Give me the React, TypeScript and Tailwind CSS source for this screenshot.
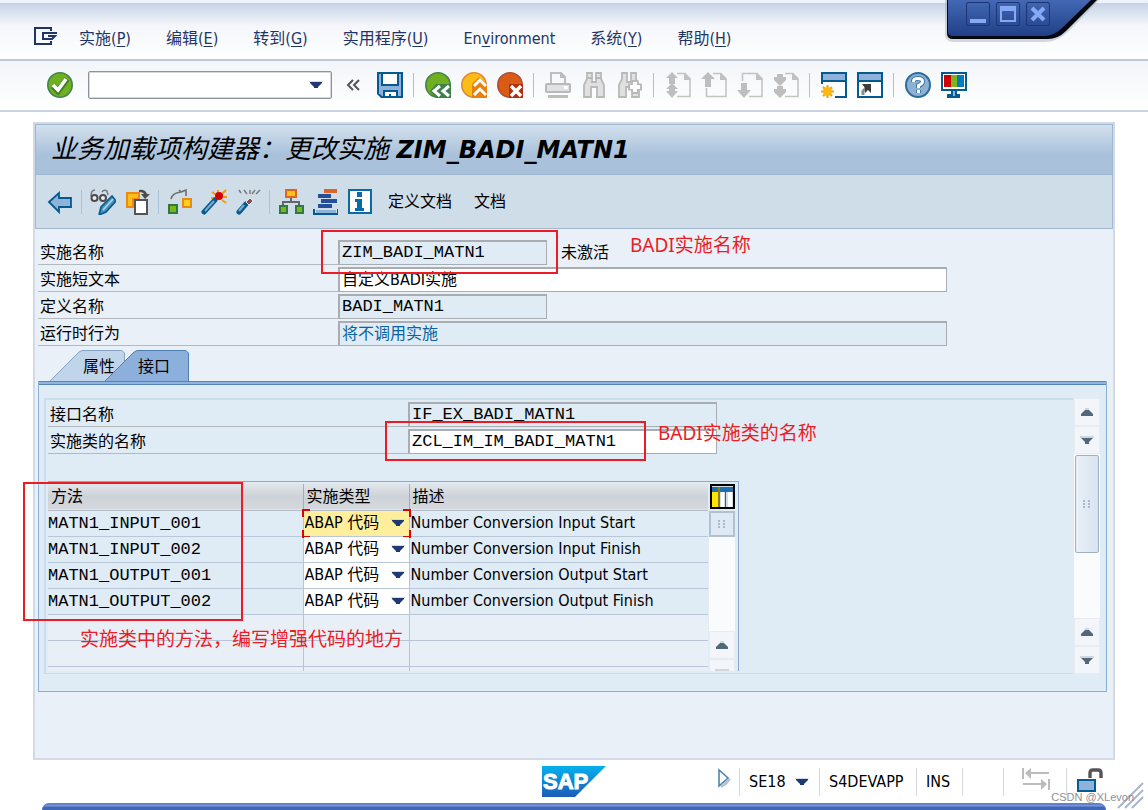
import type { ReactNode } from "react";

const MENUS = [
  { before: "实施(", key: "P", after: ")" },
  { before: "编辑(", key: "E", after: ")" },
  { before: "转到(", key: "G", after: ")" },
  { before: "实用程序(", key: "U", after: ")" },
  { before: "En", key: "v", after: "ironment" },
  { before: "系统(", key: "Y", after: ")" },
  { before: "帮助(", key: "H", after: ")" },
];

const METHODS = [
  { name: "MATN1_INPUT_001", description: "Number Conversion Input Start" },
  { name: "MATN1_INPUT_002", description: "Number Conversion Input Finish" },
  { name: "MATN1_OUTPUT_001", description: "Number Conversion Output Start" },
  { name: "MATN1_OUTPUT_002", description: "Number Conversion Output Finish" },
];

function Icon({ children }: { children: ReactNode }) {
  return (
    <svg viewBox="0 0 26 26" className="block size-[26px]" fill="none" aria-hidden="true">
      {children}
    </svg>
  );
}

function IconButton({ label, disabled, children }: { label: string; disabled?: boolean; children: ReactNode }) {
  return (
    <button type="button" aria-label={label} disabled={disabled} className="shrink-0">
      <Icon>{children}</Icon>
    </button>
  );
}

function Separator() {
  return <span className="h-6 w-px shrink-0 bg-[#a9c3de]" />;
}

function Caret() {
  return (
    <svg viewBox="0 0 14 8" className="block h-2 w-3.5 shrink-0" aria-hidden="true">
      <path d="M0 0H14V1H0Z" fill="#d5dae2" />
      <path d="M1 1H13V2L9 6V7H5V6L1 2Z" fill="#1f3a73" />
    </svg>
  );
}

// Grey page with a folded corner, shared by the four paging buttons
function PageOutline() {
  return (
    <>
      <path d="M12 1.5H20L25 6.5V24.5H12" stroke="#c4c4c4" strokeWidth="1.6" />
      <path d="M19 1L26 8H19Z" fill="#c0c0c0" />
    </>
  );
}

function MainToolbar() {
  return (
    <div className="flex h-[51px] items-center gap-2.5 border-b-2 border-[#cbd2df] bg-linear-to-b from-[#f2f5f9] to-white pb-0.5 pl-[47px]">
      <IconButton label="Enter">
        <circle cx="13" cy="13" r="12.2" fill="#6fb01e" stroke="#458452" strokeWidth="1.6" />
        <path d="M6 14L11 19L20 7" stroke="#3e7a2c" strokeWidth="6" />
        <path d="M6 13L11 18L19 7" stroke="#fff" strokeWidth="3.6" />
      </IconButton>
      <div className="ml-[5px] flex h-7 w-[244px] items-center rounded-xs border border-[#8f9397] bg-white pr-2 ring-1 ring-[#d5d8dc] ring-inset">
        <input aria-label="Command" className="min-w-0 flex-1 px-1 outline-none" />
        <button type="button" aria-label="History">
          <Caret />
        </button>
      </div>
      <button type="button" aria-label="Collapse" className="w-[25px] pl-1">
        <svg viewBox="0 0 14 12" className="h-3 w-3.5" fill="none" aria-hidden="true">
          <path d="M7 1L2 6L7 11M13 1L8 6L13 11" stroke="#555" strokeWidth="2" />
        </svg>
      </button>
      <IconButton label="Save">
        <path d="M0 0H26V26H4L0 22Z" fill="#055a8f" />
        <path d="M2 2H4V22H2ZM22 2H24V24H22Z" fill="#8fb2da" />
        <path d="M6 2H20V12H6Z" fill="#fff" />
        <path d="M2 14H24V24H5L2 21Z" fill="#8fb2da" />
        <path d="M6 18H21V26H6Z" fill="#055a8f" />
        <path d="M8 20H19V24H14V22H12V24H8Z" fill="#fff" />
      </IconButton>
      <span className="mr-px h-6 w-px shrink-0 bg-[#a9c3de]" />
      <IconButton label="Back">
        <circle cx="13" cy="13" r="12.2" fill="#6fb01e" stroke="#458452" strokeWidth="1.6" />
        <path d="M11 12H26V26H11L5 19Z" fill="#3e7f4a" />
        <path d="M15 14L9 19L15 24M24 14L18 19L24 24" stroke="#fff" strokeWidth="3" />
      </IconButton>
      <IconButton label="Exit">
        <circle cx="13" cy="13" r="12.2" fill="#fdbd14" stroke="#dd8a3c" strokeWidth="1.6" />
        <path d="M11 12L18 5L26 12V26H11Z" fill="#e5820f" />
        <path d="M13 14L19 8L25 14M13 23L19 17L25 23" stroke="#fff" strokeWidth="3" />
      </IconButton>
      <IconButton label="Cancel">
        <circle cx="13" cy="13" r="12.2" fill="#d95b16" stroke="#b14f35" strokeWidth="1.6" />
        <path d="M12 12H26V26H12Z" fill="#b03010" />
        <path d="M14 14L24 24M24 14L14 24" stroke="#fff" strokeWidth="3.4" />
      </IconButton>
      <span className="mr-px h-6 w-px shrink-0 bg-[#a9c3de]" />
      <IconButton label="Print" disabled>
        <path d="M6 11V1H16L20 5V11" stroke="#bdbdbd" strokeWidth="2" />
        <path d="M15 0L21 6H15Z" fill="#bdbdbd" />
        <rect x="1" y="12" width="24" height="8" rx="1" fill="#e2e2e2" stroke="#b9b9b9" strokeWidth="2" />
        <path d="M19 14H23V17H19Z" fill="#fff" />
        <path d="M3 23H23V26H3Z" fill="#bdbdbd" />
      </IconButton>
      <IconButton label="Find" disabled>
        <path d="M3 25V13L6 7V1H11V10H15V1H20V7L23 13V25H16V15H10V25Z" fill="#e0e0e0" stroke="#b9b9b9" strokeWidth="1.8" />
        <path d="M5 6H12M14 6H21" stroke="#b9b9b9" strokeWidth="2" />
      </IconButton>
      <IconButton label="Find next" disabled>
        <path d="M2 25V13L5 7V1H10V10H14V1H19V7L22 13V25H15V15H9V25Z" fill="#e0e0e0" stroke="#b9b9b9" strokeWidth="1.8" />
        <path d="M18 8V22M11 15H25" stroke="#b9b9b9" strokeWidth="7" />
        <path d="M18 10V20M13 15H23" stroke="#fff" strokeWidth="4" />
      </IconButton>
      <span className="mr-px h-6 w-px shrink-0 bg-[#a9c3de]" />
      <IconButton label="First page" disabled>
        <PageOutline />
        <path d="M7 0L13 6H10V9H4V6H1ZM4 9H10V12H4ZM7 11L13 17H10V19H13L7 26L1 19H4V17H1Z" fill="#bebebe" />
      </IconButton>
      <IconButton label="Previous page" disabled>
        <PageOutline />
        <path d="M5.500 16V24.500H13" stroke="#c4c4c4" strokeWidth="1.6" />
        <path d="M7 0L14 7H10V15H4V7H0Z" fill="#bebebe" />
      </IconButton>
      <IconButton label="Next page" disabled>
        <PageOutline />
        <path d="M5.500 9V1.500H13" stroke="#c4c4c4" strokeWidth="1.6" />
        <path d="M4 11H10V18H14L7 26L0 18H4Z" fill="#bebebe" />
      </IconButton>
      <IconButton label="Last page" disabled>
        <PageOutline />
        <path d="M4 2H10V5H13V8L7 14L1 8V5H4ZM4 14H10V17H13V20L7 26L1 20V17H4Z" fill="#bebebe" />
      </IconButton>
      <span className="mr-px h-6 w-px shrink-0 bg-[#a9c3de]" />
      <IconButton label="New session">
        <path d="M1 12V1H25V25H14" fill="#fff" stroke="#055a8f" strokeWidth="2" />
        <path d="M2 2H24V8H2Z" fill="#8fb2da" />
        <path d="M1 9H25" stroke="#055a8f" strokeWidth="2" />
        <circle cx="6.500" cy="19.500" r="6" fill="#fdf3d0" />
        <path d="M6.500 13V26M0 19.500H13M2 15L11 24M11 15L2 24" stroke="#f5a11a" strokeWidth="2" />
        <circle cx="6.500" cy="19.500" r="4.500" fill="#fdb913" />
      </IconButton>
      <IconButton label="Create shortcut">
        <path d="M1 1H25V25H1Z" fill="#fff" stroke="#055a8f" strokeWidth="2" />
        <path d="M2 2H24V8H2Z" fill="#8fb2da" />
        <path d="M1 9H25" stroke="#055a8f" strokeWidth="2" />
        <path d="M6 23V19L11 14" stroke="#8c8c8c" strokeWidth="3" />
        <path d="M5 12H14V21L11 18L8 21V16Z" fill="#3d3d3d" />
      </IconButton>
      <span className="mr-px h-6 w-px shrink-0 bg-[#a9c3de]" />
      <IconButton label="Help">
        <circle cx="13" cy="13" r="12" fill="#8db0d5" stroke="#2a6c9c" strokeWidth="2" />
        <path d="M8.500 10V9Q8.500 6.500 13 6.500Q17.500 6.500 17.500 9.500Q17.500 12 13.500 13.500V16M13.500 18V21" stroke="#3f78a8" strokeWidth="5" />
        <path d="M8.500 10V9Q8.500 6.500 13 6.500Q17.500 6.500 17.500 9.500Q17.500 12 13.500 13.500V16M13.500 18V21" stroke="#fff" strokeWidth="3" />
      </IconButton>
      <IconButton label="Customize layout">
        <path d="M1 1H25V18H1Z" fill="#fff" stroke="#055a8f" strokeWidth="2" />
        <path d="M3 3H10V15H3Z" fill="#cc0000" />
        <path d="M10 3H16V15H10Z" fill="#7cb51c" />
        <path d="M16 3H23V15H16Z" fill="#007cc2" />
        <path d="M10 19H16V22H19V26H6V22H10Z" fill="#055a8f" />
        <path d="M12 19H14V24H12Z" fill="#8fb2da" />
      </IconButton>
    </div>
  );
}

function AppToolbar() {
  return (
    <div className="flex h-[54px] items-center gap-2 border border-t-0 border-[#a5b9cd] border-t-[#e6eff7] bg-[#cfdde8] pl-[11px]">
      <IconButton label="返回">
        <path d="M2 13L12 4V9H24V18H12V23Z" fill="#8fb2da" stroke="#055a8f" strokeWidth="1.8" />
      </IconButton>
      <Separator />
      <IconButton label="显示 / 更改">
        <path d="M1 7Q1 1 5 1M12 3Q14 0 17 2L18 6" stroke="#777" strokeWidth="1.4" />
        <circle cx="4.500" cy="9" r="3" fill="#e9eff4" stroke="#4b4b4b" strokeWidth="2" />
        <circle cx="13" cy="9" r="3" fill="#e9eff4" stroke="#4b4b4b" strokeWidth="2" />
        <path d="M22 7L11 18L9 26L16 23L26 12Z" fill="#4a90bb" stroke="#055a8f" strokeWidth="1.6" />
        <path d="M13 21L23 10" stroke="#b6d3e8" strokeWidth="1.8" />
      </IconButton>
      <IconButton label="其他对象">
        <path d="M3 4H15V10H9V18H3Z" fill="#fdbf1c" stroke="#ee8a12" strokeWidth="2" />
        <path d="M15 1Q21 0 23 5H26L21 10L17 5H20Q19 3 15 3Z" fill="#4b4b4b" />
        <path d="M11 11H23V25H11Z" fill="#fff" stroke="#555" strokeWidth="2" />
      </IconButton>
      <Separator />
      <IconButton label="检查">
        <path d="M4 10Q5 4 14 3L12 1M14 3L19 1V7" stroke="#6d6d6d" strokeWidth="1.6" />
        <path d="M16 10H24V18H16Z" fill="#fdd01c" stroke="#ee8a12" strokeWidth="2" />
        <path d="M2 16H10V24H2Z" fill="#7cb51c" stroke="#2f7a3d" strokeWidth="2" />
      </IconButton>
      <IconButton label="激活">
        <path d="M17 1V5M25 1L21 5M20 8H26M21 11L25 14M11 3L15 6M10 9H14" stroke="#f29a14" strokeWidth="2" />
        <path d="M3 23L14 11" stroke="#055a8f" strokeWidth="5" strokeLinecap="round" />
        <path d="M4 22L13 12" stroke="#79acd0" strokeWidth="2" />
        <circle cx="18" cy="7" r="4" fill="#d40000" />
      </IconButton>
      <IconButton label="取消激活">
        <path d="M4 1L6 4M9 1L12 5M15 1V5M20 1L17 5M25 1L21 5" stroke="#777" strokeWidth="1.4" />
        <path d="M4 23L11 15" stroke="#055a8f" strokeWidth="5" strokeLinecap="round" />
        <path d="M4 22L9 16" stroke="#79acd0" strokeWidth="2" />
        <path d="M11 13L15 9L18 12L14 16Z" fill="#8d4a4a" stroke="#dfe5ea" />
      </IconButton>
      <Separator />
      <IconButton label="层次">
        <path d="M13 9V13M5 17V13H21V17" stroke="#666" strokeWidth="2" />
        <path d="M8 1H18V8H8Z" fill="#fdbf1c" stroke="#e0641a" strokeWidth="2" />
        <path d="M2 17H9V24H2ZM18 17H25V24H18Z" fill="#7cb51c" stroke="#2f7a3d" strokeWidth="2" />
      </IconButton>
      <IconButton label="对齐">
        <path d="M12 0H25V4H12Z" fill="#d9652a" />
        <path d="M6 5H19V9H6ZM9 10H25V14H9ZM6 15H20V19H6Z" fill="#24509a" />
        <path d="M2 20V25H26V20" stroke="#055a8f" strokeWidth="2" />
        <path d="M4 21H24V24H4Z" fill="#8fb2da" />
      </IconButton>
      <IconButton label="信息">
        <path d="M3 1H25V24H3Z" fill="#fff" stroke="#0a6aa6" strokeWidth="2" />
        <path d="M11 3H16V8H11ZM9 10H16V19H18V22H9V19H11V13H9Z" fill="#0a6aa6" />
      </IconButton>
      <button type="button" className="ml-2">定义文档</button>
      <button type="button" className="ml-3.5">文档</button>
    </div>
  );
}

function FieldRow({ id, label, labelClass, children }: { id: string; label: string; labelClass: string; children: ReactNode }) {
  return (
    <div className="flex h-[25px]">
      <label htmlFor={id} className={`shrink-0 border-b border-[#b5b8bc] leading-[26px] ${labelClass}`}>
        {label}
      </label>
      {children}
    </div>
  );
}

const FIELD = "min-w-0 border border-t-2 border-l-2 border-[#a9adb2] pl-0.5 outline-none ";
const MONO = "font-['Liberation_Mono','Noto_Sans_CJK_SC',monospace] text-[17px] ";

function ScrollArrow({ down }: { down?: boolean }) {
  return (
    <button
      type="button"
      aria-label={down ? "向下滚动" : "向上滚动"}
      className="flex h-7 w-full shrink-0 items-center justify-center border border-[#e9ebf0] bg-[#f2f5fa]"
    >
      <svg viewBox="0 0 14 8" className="h-2 w-3.5" aria-hidden="true">
        {down ? (
          <>
            <path d="M0 0H14V2H0Z" fill="#cfd6dc" />
            <path d="M1 2H13L9 6V8H5V6Z" fill="#526878" />
          </>
        ) : (
          <>
            <path d="M5 0H9V2H5Z" fill="#cfd6dc" />
            <path d="M1 8V6L5 2H9L13 6V8Z" fill="#526878" />
          </>
        )}
      </svg>
    </button>
  );
}

function Grip() {
  return (
    <svg viewBox="0 0 8 8" className="size-2" fill="#a9bacb" aria-hidden="true">
      <path d="M0 0H2V2H0ZM5 0H7V2H5ZM0 3H2V5H0ZM5 3H7V5H5ZM0 6H2V8H0ZM5 6H7V8H5Z" />
    </svg>
  );
}

function Tabs() {
  return (
    <div role="tablist" className="mt-1 flex h-[31px] pl-3">
      <button type="button" role="tab" aria-selected="false" className="relative w-[75px] pt-0.5 pl-[33px] text-left">
        <svg viewBox="0 0 75 31" className="absolute inset-0 h-full w-full" aria-hidden="true">
          <path d="M0 31L29 2L32 0.500H72L74.500 3V31" fill="#c0d5e9" stroke="#84a3c6" />
        </svg>
        <span className="relative">属性</span>
      </button>
      <button type="button" role="tab" aria-selected="true" className="relative -ml-5 w-[84px] pt-0.5 pl-[33px] text-left">
        <svg viewBox="0 0 84 31" className="absolute inset-0 h-full w-full" aria-hidden="true">
          <path d="M0 31L29 2L32 0.500H81L83.500 3V31" fill="#8cb0db" stroke="#4f80b4" />
        </svg>
        <span className="relative">接口</span>
      </button>
    </div>
  );
}

function MethodTable() {
  return (
    <div className="mt-[27px] flex h-[190px] w-[691px] overflow-hidden border-t border-r border-[#8aa9cc] pt-0.5">
      <table className="h-fit w-[660px] table-fixed border-collapse">
        <colgroup>
          <col className="w-[255px]" />
          <col className="w-[106px]" />
          <col />
        </colgroup>
        <thead>
          <tr className="h-[26px] border-b border-[#b3bcc7] bg-linear-to-b from-[#e2e6ea] via-[#cdd2d8] to-[#d5d9de] text-left leading-none">
            <th className="p-0 pl-[3px] font-normal">方法</th>
            <th className="border-x border-[#a4acb6] p-0 pl-[3px] font-normal">实施类型</th>
            <th className="p-0 pl-[3px] font-normal">描述</th>
          </tr>
        </thead>
        <tbody>
          {METHODS.map((method, i) => (
            <tr key={method.name} className="h-[26px] border-b border-[#b9c8d8] bg-[#dfebf5]">
              <td className={MONO + "p-0 leading-none"}>{method.name}</td>
              <td className={`relative border-x border-[#b9c4d1] p-0 ${i === 0 ? "bg-[#ffee9b]" : "bg-white"}`}>
                <select
                  aria-label={`实施类型 ${method.name}`}
                  className="block h-[25px] w-full appearance-none bg-transparent pl-px outline-none"
                >
                  <option>ABAP 代码</option>
                </select>
                <span className="pointer-events-none absolute top-2 right-1">
                  <Caret />
                </span>
                {i === 0 && (
                  <span className="pointer-events-none absolute -inset-x-0.5 -top-0.5 -bottom-0.5 flex flex-col justify-between">
                    <span className="flex justify-between">
                      <span className="size-2 border-t-2 border-l-2 border-[#e00000]" />
                      <span className="size-2 border-t-2 border-r-2 border-[#e00000]" />
                    </span>
                    <span className="flex justify-between">
                      <span className="size-2 border-b-2 border-l-2 border-[#e00000]" />
                      <span className="size-2 border-r-2 border-b-2 border-[#e00000]" />
                    </span>
                  </span>
                )}
              </td>
              <td className="p-0 pl-px leading-none whitespace-nowrap">{method.description}</td>
            </tr>
          ))}
          {[0, 1, 2].map((n) => (
            <tr key={n} className="h-[26px] border-b border-[#b9c4d6] bg-[#e8eff7]">
              <td className="p-0" />
              <td className="border-x border-[#b9c4d1] p-0" />
              <td className="p-0" />
            </tr>
          ))}
        </tbody>
      </table>
      <div className="ml-px flex w-[26px] flex-col items-center">
        <button type="button" aria-label="表格设置" className="mb-0.5 shrink-0">
          <svg viewBox="0 0 25 25" className="block size-[25px]" aria-hidden="true">
            <path d="M0 0H25V25H0Z" fill="#000" />
            <path d="M2 2H23V23H2Z" fill="#cfdde8" />
            <path d="M2 3H23V8H2Z" fill="#1f6fb2" />
            <path d="M2 8H8V23H2Z" fill="#ffe600" />
            <path d="M8 3H10V23H8Z" fill="#8f8200" />
            <path d="M11 8H14V23H11ZM18 8H22V23H18Z" fill="#fff" />
            <path d="M15 3H16V23H15Z" fill="#555" />
          </svg>
        </button>
        <div className="flex h-[26px] w-full shrink-0 items-center justify-center border-2 border-[#b3c2d1] bg-[#dfe9f3]">
          <Grip />
        </div>
        <div className="h-[94px] w-full shrink-0 bg-[#fafbfd]" />
        <ScrollArrow />
        <ScrollArrow down />
      </div>
    </div>
  );
}

function InterfaceTab() {
  return (
    <div className="mr-1.5 border border-t-0 border-[#8ab0d4] bg-[#dfebf5]">
      <div className="h-1 border-y border-[#5484b8] bg-[#8fb4dd]" />
      <div className="flex pt-[13px] pr-1.5 pb-[17px] pl-[5px]">
        <div className="min-w-0 flex-1 border-t-2 border-b border-l-2 border-[#ccdcea] py-0.5 pl-0.5">
          <div className="flex flex-col gap-0.5">
            <FieldRow id="interface" label="接口名称" labelClass="w-[360px] pl-0.5">
              <input id="interface" readOnly defaultValue="IF_EX_BADI_MATN1" className={FIELD + MONO + "w-[309px] bg-[#dfebf5]"} />
            </FieldRow>
            <FieldRow id="implClass" label="实施类的名称" labelClass="w-[360px] pl-0.5">
              <input id="implClass" defaultValue="ZCL_IM_IM_BADI_MATN1" className={FIELD + MONO + "w-[309px] bg-white"} />
            </FieldRow>
          </div>
          <MethodTable />
        </div>
        <div className="ml-px flex w-[26px] flex-col bg-[#fafbfd]">
          <ScrollArrow />
          <ScrollArrow down />
          <div className="mx-px mt-px flex h-[98px] items-center justify-center rounded-xs border border-[#9fb0c0] bg-linear-to-r from-[#e9f0f7] to-[#d9e4f0]">
            <Grip />
          </div>
          <div className="flex-1" />
          <ScrollArrow />
          <ScrollArrow down />
        </div>
      </div>
    </div>
  );
}

function WindowControls() {
  return (
    <div className="absolute top-0 right-12 h-11 w-[160px]">
      <svg viewBox="0 0 160 44" className="absolute inset-0 h-full w-full" aria-hidden="true">
        <defs>
          <linearGradient id="controls" x1="0" y1="0" x2="0" y2="1">
            <stop offset="0" stopColor="#4468b4" />
            <stop offset="1" stopColor="#203f86" />
          </linearGradient>
        </defs>
        <path d="M5 0V35Q6 42 13 42H104Q117 42 128 32L159 0Z" fill="#8a93a5" opacity="0.350" />
        <path d="M7 0V33Q7 39 13 39H108Q118 39 126 31L157 0Z" fill="#05070f" />
        <path d="M8 0V32Q8 36 13 36H105Q113 36 121 29L151 0Z" fill="url(#controls)" />
      </svg>
      <div className="relative flex gap-1.5 pt-0.5 pl-[26px]">
        <button type="button" aria-label="Minimize" className="size-6 rounded-xs border border-[#1b3575]">
          <svg viewBox="0 0 22 22" aria-hidden="true">
            <path d="M3 16H19V20H3Z" fill="#85a9f5" />
          </svg>
        </button>
        <button type="button" aria-label="Maximize" className="size-6 rounded-xs border border-[#1b3575]">
          <svg viewBox="0 0 22 22" aria-hidden="true">
            <path d="M3 3H19V19H3ZM5 8V17H17V8Z" fill="#85a9f5" fillRule="evenodd" />
          </svg>
        </button>
        <button type="button" aria-label="Close" className="size-6 rounded-xs border border-[#1b3575]">
          <svg viewBox="0 0 22 22" aria-hidden="true">
            <path d="M5 5L17 17M17 5L5 17" stroke="#85a9f5" strokeWidth="4" />
          </svg>
        </button>
      </div>
    </div>
  );
}

function StatusBar() {
  return (
    <footer className="relative grid h-[43px] grid-cols-[1fr_auto_1fr] items-center">
      <span />
      <svg viewBox="0 0 64 31" className="h-[31px] w-16" role="img" aria-label="SAP">
        <defs>
          <linearGradient id="sap" x1="0" y1="0" x2="0" y2="1">
            <stop offset="0" stopColor="#05b1ee" />
            <stop offset="1" stopColor="#1c5cb8" />
          </linearGradient>
        </defs>
        <path d="M0 0H64L33 31H0Z" fill="url(#sap)" />
        <text x="1" y="23" fill="#fff" stroke="#fff" fontFamily="Liberation Sans" fontWeight="700" fontSize="22">
          SAP
        </text>
      </svg>
      <div className="flex h-7 justify-end">
        <button type="button" aria-label="Show fields" className="mr-2 self-start">
          <svg viewBox="0 0 14 20" className="h-5 w-3.5" fill="none" aria-hidden="true">
            <path d="M4 19L13 11L9 16Z" fill="#9a9a9a" stroke="#b5c2cc" strokeWidth="2" />
            <path d="M2 2V18L11 10Z" fill="#fff" stroke="#4f86ad" strokeWidth="1.6" />
          </svg>
        </button>
        <div className="flex w-20 items-center justify-between border-l border-[#d5d8dd] pr-2.5 pl-[9px]">
          SE18
          <button type="button" aria-label="System info">
            <Caret />
          </button>
        </div>
        <div className="flex w-[97px] items-center border-l border-[#d5d8dd] pl-[9px]">S4DEVAPP</div>
        <div className="flex w-[46px] items-center border-l border-[#d5d8dd] pl-[9px]">INS</div>
        <div className="w-[41px] border-l border-[#d5d8dd]" />
        <div className="w-[63px] border-l border-[#d5d8dd] pl-[18px]">
          <svg viewBox="0 0 28 22" className="h-[22px] w-7" fill="#bcbcbc" aria-hidden="true">
            <path d="M0 0H2V11H0ZM3 5L9 0V4H27V6H9V11ZM26 11H28V22H26ZM25 16L19 11V15H1V17H19V22Z" />
          </svg>
        </div>
        <div className="w-[82px] border-l border-[#d5d8dd] pl-2.5">
          <svg viewBox="0 0 27 24" className="h-6 w-[27px]" fill="none" aria-hidden="true">
            <path d="M13 10V5Q13 2 16 2H21Q24 2 24 5V10" stroke="#555" strokeWidth="3.4" />
            <path d="M1 12H18V23H1Z" fill="#8fb2da" stroke="#055a8f" strokeWidth="2" />
          </svg>
        </div>
      </div>
      <svg viewBox="0 0 28 28" className="absolute right-1 -bottom-1.5 size-7" aria-hidden="true">
        <path d="M2 27L27 2M9 27L27 9M16 27L27 16" stroke="#a9b6cc" strokeWidth="2" />
      </svg>
      <span className="absolute right-3.5 bottom-0 font-['Liberation_Sans',sans-serif] text-[11px] leading-3 text-[#8e9096]">CSDN @XLevon</span>
    </footer>
  );
}

// Red marker boxes and remarks laid over the screen
function Annotations() {
  return (
    <div className="pointer-events-none font-['Noto_Sans','Noto_Sans_CJK_SC',sans-serif] text-[19px] leading-6 whitespace-nowrap text-[#ed1c24]">
      <div className="absolute top-[230px] left-[321px] h-11 w-[237px] border-2" />
      <div className="absolute top-[421px] left-[385px] h-10 w-[261px] border-2" />
      <div className="absolute top-[482px] left-[23px] h-[139px] w-[220px] border-2" />
      <p className="absolute top-[233px] left-[630px]">BADI实施名称</p>
      <p className="absolute top-[421px] left-[658px]">BADI实施类的名称</p>
      <p className="absolute top-[627px] left-[80px]">实施类中的方法，编写增强代码的地方</p>
    </div>
  );
}

export default function App() {
  return (
    <div className="relative flex min-h-screen flex-col overflow-hidden bg-white font-['DejaVu_Sans_Condensed','Noto_Sans','Noto_Sans_CJK_SC',sans-serif] text-base leading-6 text-black">
      <header className="border-t-3 border-[#eef2fa]">
        <nav className="flex h-[58px] gap-[35px] border-b-2 border-[#c0c8d8] bg-linear-to-b from-[#c6d3e6] via-[#f4f6fa] via-40% to-white pt-6 pl-[34px] text-[#1f3566]">
          <button type="button" aria-label="System menu" className="-mr-3.5 self-start">
            <svg viewBox="0 0 24 18" className="block h-[18px] w-6" fill="none" aria-hidden="true">
              <path d="M17 4V1H1V17H17V14M23 6H9V12H18L21 9H14" stroke="#1f3566" strokeWidth="2" />
            </svg>
          </button>
          {MENUS.map((menu) => (
            <button key={menu.before} type="button" className="self-start whitespace-nowrap">
              {menu.before}
              <u className="underline-offset-2">{menu.key}</u>
              {menu.after}
            </button>
          ))}
        </nav>
        <MainToolbar />
      </header>

      <main className="mx-[33px] mt-2.5 flex flex-1 flex-col border-2 border-[#d2dae7] bg-[#e9f0f7]">
        <h1 className="h-[51px] border border-[#9fb6cf] bg-linear-to-b from-[#d3e1ed] to-[#a9c1db] to-60% pl-[15px] text-[26px] leading-[49px] whitespace-nowrap italic">
          业务加载项构建器：更改实施{" "}
          <b className="font-['DejaVu_Sans',sans-serif] text-2xl leading-none">ZIM_BADI_MATN1</b>
        </h1>
        <AppToolbar />
        <form className="pt-[11px] pl-[3px]">
          <div className="flex flex-col gap-0.5">
            <FieldRow id="implName" label="实施名称" labelClass="w-[300px] pl-0.5">
              <input id="implName" readOnly defaultValue="ZIM_BADI_MATN1" className={FIELD + MONO + "w-[209px] bg-[#dfebf5]"} />
              <span className="pl-3.5 leading-[26px]">未激活</span>
            </FieldRow>
            <FieldRow id="shortText" label="实施短文本" labelClass="w-[300px] pl-0.5">
              <input id="shortText" defaultValue="自定义BADI实施" className={FIELD + "w-[609px] bg-white"} />
            </FieldRow>
            <FieldRow id="defName" label="定义名称" labelClass="w-[300px] pl-0.5">
              <input id="defName" readOnly defaultValue="BADI_MATN1" className={FIELD + MONO + "w-[209px] bg-[#dfebf5]"} />
            </FieldRow>
            <FieldRow id="runtime" label="运行时行为" labelClass="w-[300px] pl-0.5">
              <input id="runtime" readOnly defaultValue="将不调用实施" className={FIELD + "w-[609px] bg-[#dfebf5] text-[#0a64a4]"} />
            </FieldRow>
          </div>
          <Tabs />
          <InterfaceTab />
        </form>
      </main>

      <StatusBar />
      <div className="mx-[42px] h-[7px] rounded-t-[20px] border-t-2 border-[#6280c4] bg-linear-to-b from-[#86a5e6] to-[#4066b8] to-50%" />
      <WindowControls />
      <Annotations />
    </div>
  );
}
